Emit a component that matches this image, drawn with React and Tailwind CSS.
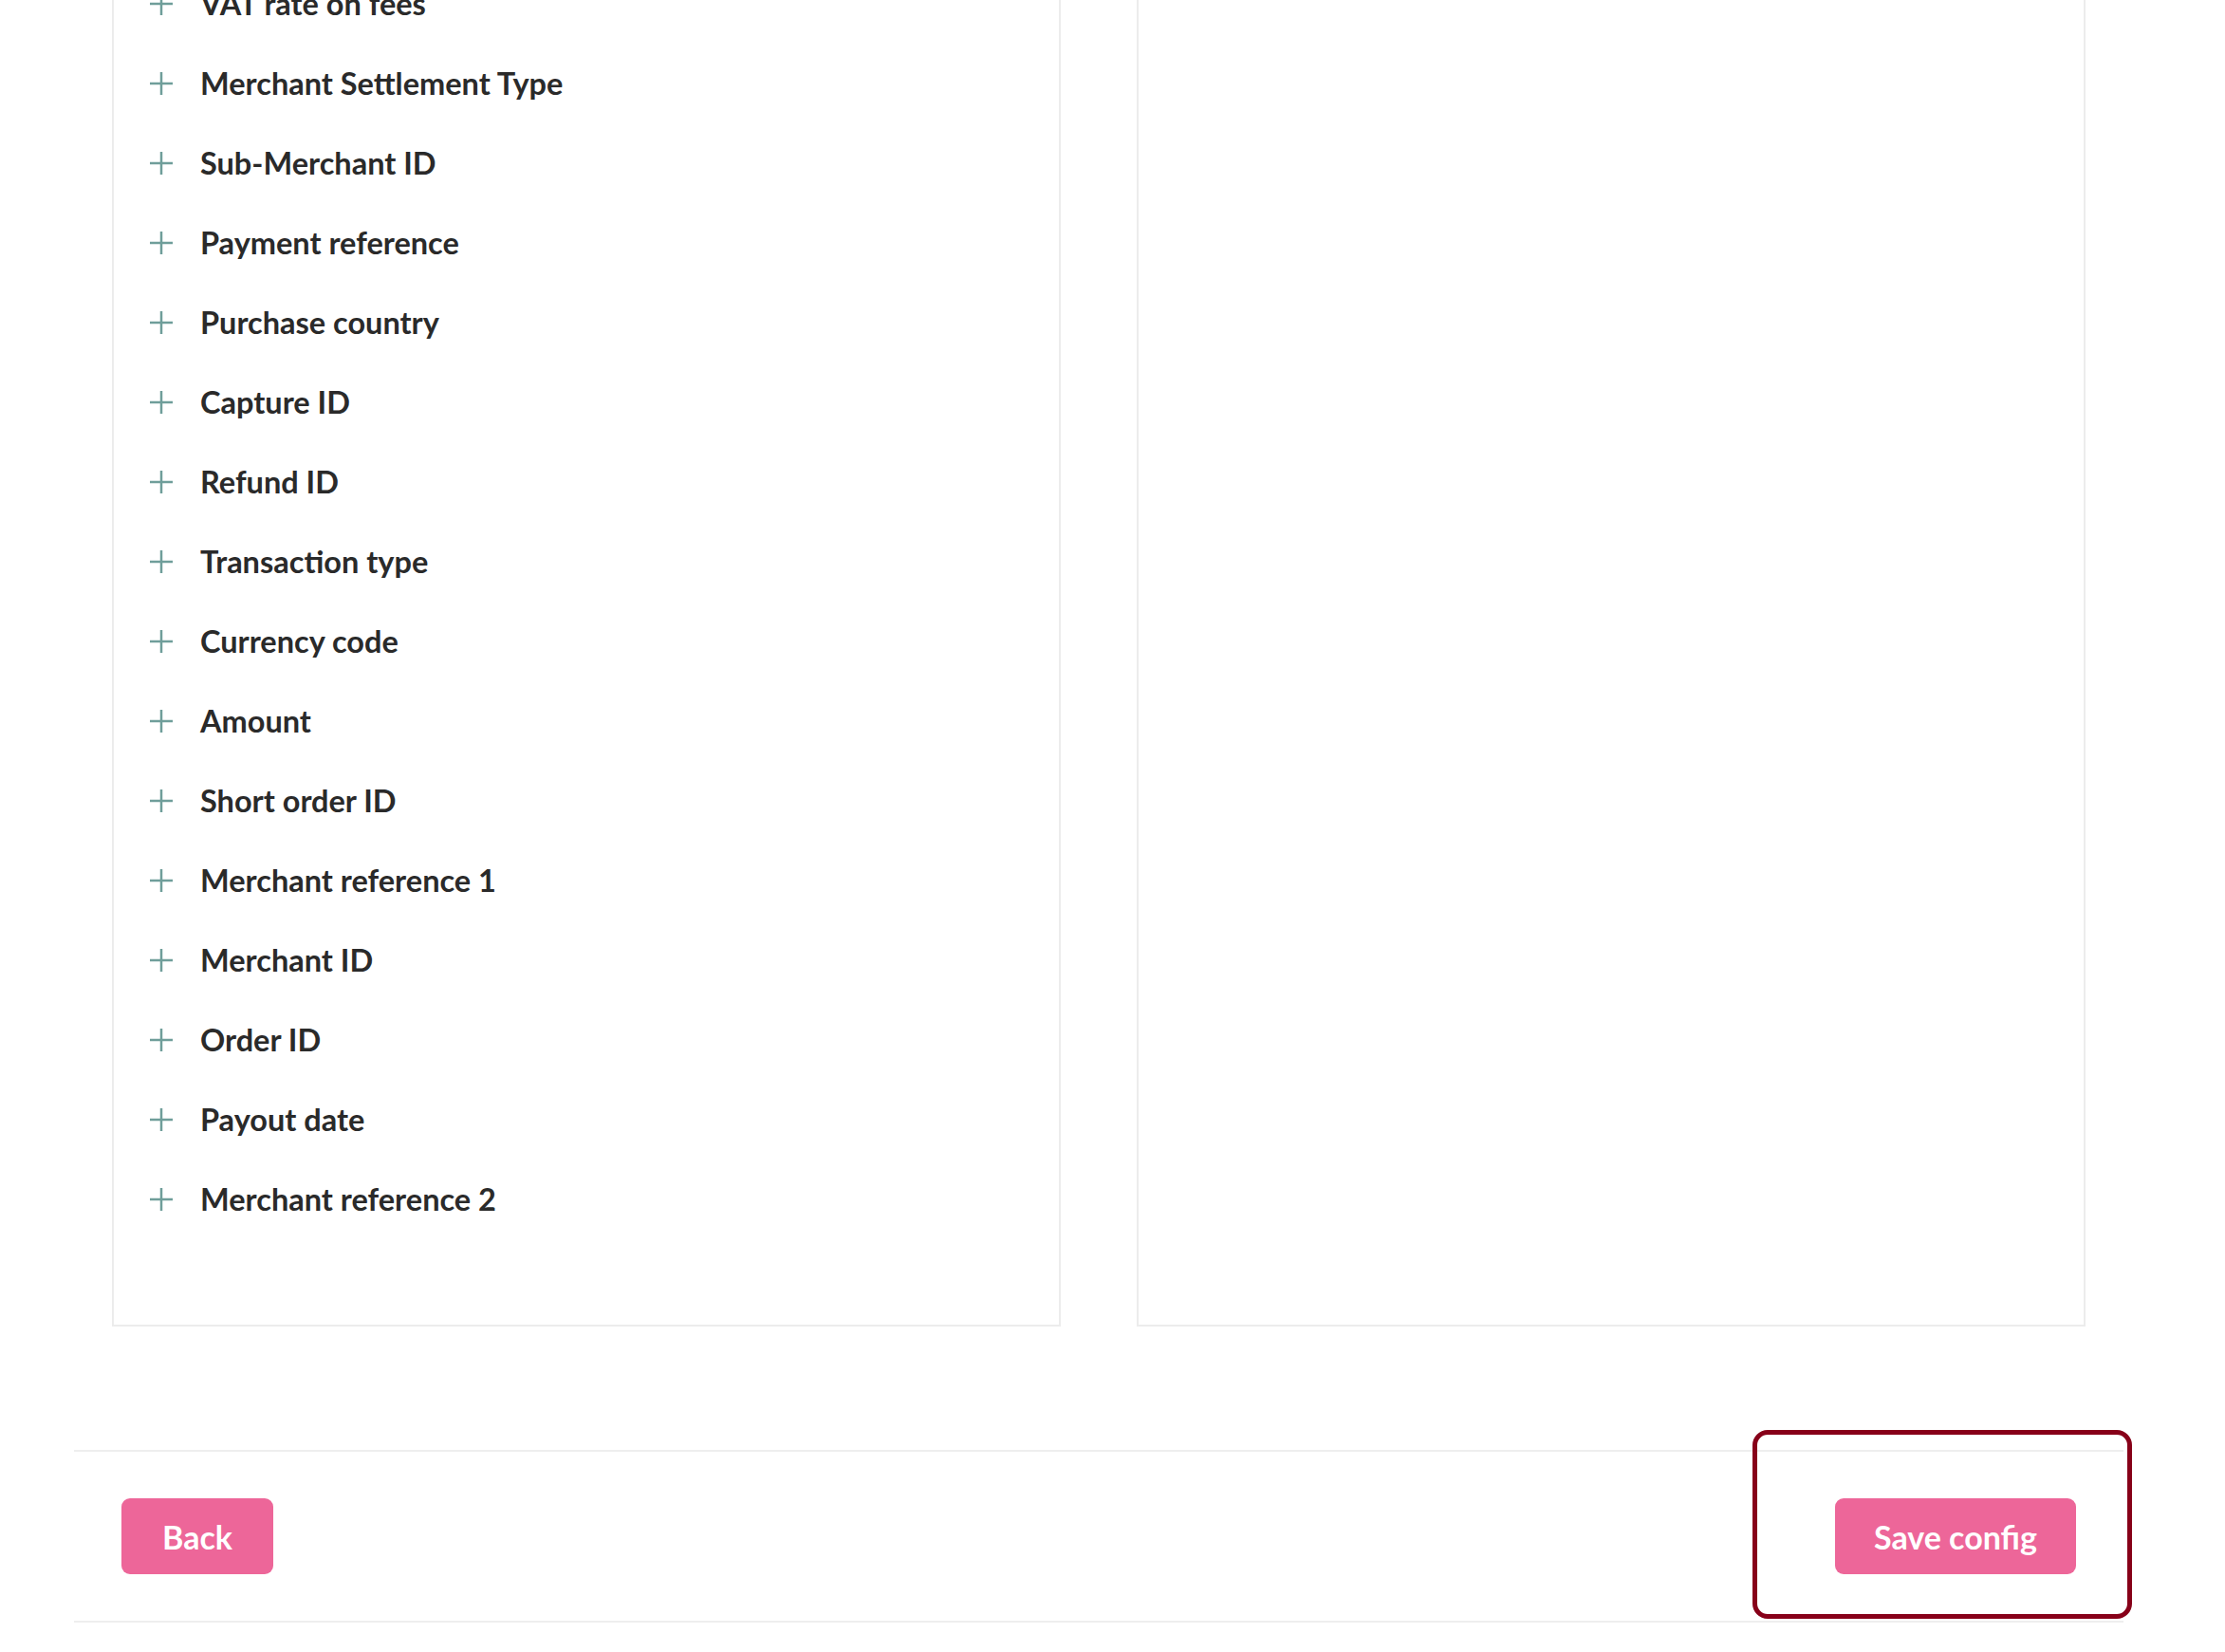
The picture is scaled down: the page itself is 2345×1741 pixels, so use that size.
import React from "react";

const items = [
  "VAT rate on fees",
  "Merchant Settlement Type",
  "Sub-Merchant ID",
  "Payment reference",
  "Purchase country",
  "Capture ID",
  "Refund ID",
  "Transaction type",
  "Currency code",
  "Amount",
  "Short order ID",
  "Merchant reference 1",
  "Merchant ID",
  "Order ID",
  "Payout date",
  "Merchant reference 2",
];

function Plus() {
  return (
    <svg width="24" height="24" viewBox="0 0 24 24" className="shrink-0">
      <path d="M12 0v24M0 12h24" stroke="#6f9e9a" strokeWidth="2.5" fill="none" />
    </svg>
  );
}

export default function App() {
  return (
    <div
      className="relative w-[2345px] h-[1741px] overflow-hidden bg-white"
      style={{ fontFamily: "Lato, 'Open Sans', sans-serif" }}
    >
      <div className="ml-[78px] w-[2160px]">
        <div className="flex gap-[80px] px-[40px] -mt-[40px]">
          <div className="w-[1000px] border-2 border-[#ececec] pb-[90px]">
            {items.map((t) => (
              <div key={t} className="h-[84px] flex items-center pl-[38px] gap-[29px]">
                <Plus />
                <span className="text-[32.5px] font-bold text-[#2a2a2a] leading-none">{t}</span>
              </div>
            ))}
          </div>
          <div className="w-[1000px] border-2 border-[#ececec]" />
        </div>
        <div className="mt-[130px] border-y-2 border-[#eeeeee] flex justify-between items-center px-[50px] py-[49px]">
          <button className="h-[80px] w-[160px] rounded-[9px] bg-[#ed6699] text-white text-[34px] font-bold">
            Back
          </button>
          <button className="h-[80px] w-[254px] rounded-[9px] bg-[#ed6699] text-white text-[34px] font-bold">
            Save config
          </button>
        </div>
      </div>
      <div className="absolute left-[1847px] top-[1507px] w-[400px] h-[199px] border-[5px] border-[#870019] rounded-[16px]" />
    </div>
  );
}
